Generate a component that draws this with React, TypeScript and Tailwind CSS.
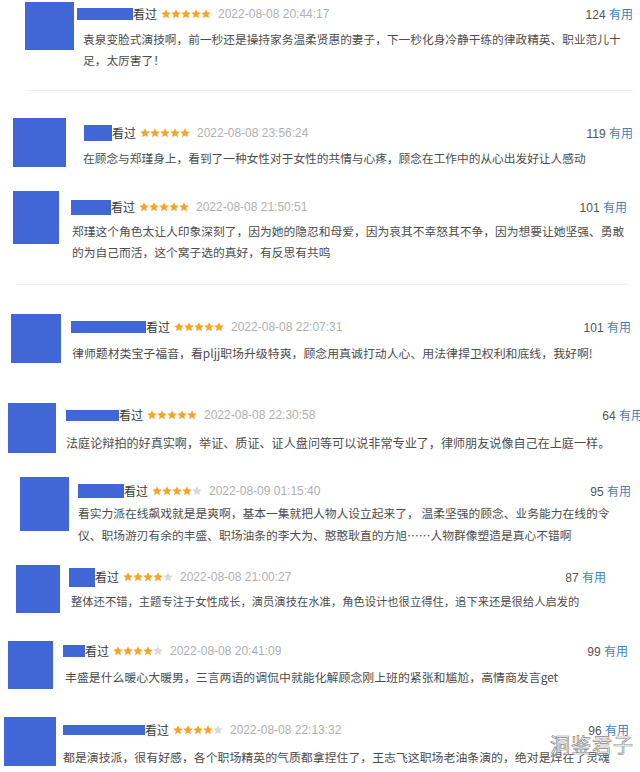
import React from "react";

type Row = {
  outer: string;
  pad: string;
  av: string;
  content: string;
  bar: string;
  text: string;
  inner?: string;
  divider?: string;
  stars: number;
  date: string;
  count: string;
  body: string;
};

const rows: Row[] = [
  {
    outer: "h-[116px]",
    pad: "pl-[25px]",
    av: "w-[49px] h-[48px]",
    content: "ml-[3px] w-[556px] pt-[4px]",
    bar: "w-[56px] h-[12px]",
    text: "mt-[6px] pl-[6px] pr-[10px] text-[11.7px] leading-[21px]",
    inner: "h-[70px]",
    divider: "mt-[18px] ml-[27px] w-[606px]",
    stars: 5,
    date: "2022-08-08 20:44:17",
    count: "124",
    body: "袁泉变脸式演技啊，前一秒还是操持家务温柔贤惠的妻子，下一秒化身冷静干练的律政精英、职业范儿十足，太厉害了！",
  },
  {
    outer: "h-[73px]",
    pad: "pl-[13px]",
    av: "w-[53px] h-[49px]",
    content: "ml-[17px] w-[550px] pt-[7px]",
    bar: "ml-[1px] w-[28px] h-[16px]",
    text: "mt-[6px] pl-0 text-[11.7px] leading-[21px]",
    stars: 5,
    date: "2022-08-08 23:56:24",
    count: "119",
    body: "在顾念与郑瑾身上，看到了一种女性对于女性的共情与心疼，顾念在工作中的从心出发好让人感动",
  },
  {
    outer: "h-[123px]",
    pad: "pl-[13px]",
    av: "w-[46px] h-[53px]",
    content: "ml-[12px] w-[556px] pt-[8px]",
    bar: "w-[40px] h-[15px]",
    text: "mt-[5px] pl-[1px] text-[11.75px] leading-[21px]",
    inner: "h-[72px]",
    divider: "mt-[21px] ml-[16px] w-[613px]",
    stars: 5,
    date: "2022-08-08 21:50:51",
    count: "101",
    body: "郑瑾这个角色太让人印象深刻了，因为她的隐忍和母爱，因为哀其不幸怒其不争，因为想要让她坚强、勇敢的为自己而活，这个窝子选的真好，有反思有共鸣",
  },
  {
    outer: "h-[89px]",
    pad: "pl-[11px]",
    av: "w-[50px] h-[49px]",
    content: "ml-[10px] w-[560px] pt-[5px]",
    bar: "w-[75px] h-[12px]",
    text: "mt-[7px] pl-[1px] text-[11.9px] leading-[21px]",
    stars: 5,
    date: "2022-08-08 22:07:31",
    count: "101",
    body: "律师题材类宝子福音，看pljj职场升级特爽，顾念用真诚打动人心、用法律捍卫权利和底线，我好啊!",
  },
  {
    outer: "h-[74px]",
    pad: "pl-[8px]",
    av: "w-[48px] h-[50px]",
    content: "ml-[10px] w-[577px] pt-[4px]",
    bar: "w-[53px] h-[11px]",
    text: "mt-[9px] pl-0 text-[12.1px] leading-[21px]",
    stars: 5,
    date: "2022-08-08 22:30:58",
    count: "64",
    body: "法庭论辩拍的好真实啊，举证、质证、证人盘问等可以说非常专业了，律师朋友说像自己在上庭一样。",
  },
  {
    outer: "h-[88px]",
    pad: "pl-[20px]",
    av: "w-[49px] h-[54px]",
    content: "ml-[9px] w-[553px] pt-[6px]",
    bar: "w-[46px] h-[14px]",
    text: "mt-[3px] pl-0 pr-[17px] text-[11.75px] leading-[22px]",
    stars: 4,
    date: "2022-08-09 01:15:40",
    count: "95",
    body: "看实力派在线飙戏就是是爽啊，基本一集就把人物人设立起来了， 温柔坚强的顾念、业务能力在线的令仪、职场游刃有余的丰盛、职场油条的李大为、憨憨耿直的方旭……人物群像塑造是真心不错啊",
  },
  {
    outer: "h-[76px]",
    pad: "pl-[16px]",
    av: "w-[44px] h-[48px]",
    content: "ml-[9px] w-[537px] pt-[4px]",
    bar: "w-[26px] h-[19px]",
    text: "mt-[6px] pl-[2px] text-[11.3px] leading-[21px]",
    stars: 4,
    date: "2022-08-08 21:00:27",
    count: "87",
    body: "整体还不错，主题专注于女性成长，演员演技在水准，角色设计也很立得住，追下来还是很给人启发的",
  },
  {
    outer: "h-[76px]",
    pad: "pl-[8px]",
    av: "w-[45px] h-[48px]",
    content: "ml-[10px] w-[565px] pt-[2px]",
    bar: "w-[22px] h-[12px]",
    text: "mt-[7px] pl-[2px] text-[11.9px] leading-[21px]",
    stars: 4,
    date: "2022-08-08 20:41:09",
    count: "99",
    body: "丰盛是什么暖心大暖男，三言两语的调侃中就能化解顾念刚上班的紧张和尴尬，高情商发言get",
  },
  {
    outer: "h-[55px]",
    pad: "pl-[4px]",
    av: "w-[52px] h-[49px]",
    content: "ml-[7px] w-[566px] pt-[5px]",
    bar: "w-[82px] h-[10px]",
    text: "mt-[8px] pl-0 text-[11.9px] leading-[21px]",
    stars: 4,
    date: "2022-08-08 22:13:32",
    count: "96",
    body: "都是演技派，很有好感，各个职场精英的气质都拿捏住了，王志飞这职场老油条演的，绝对是焊在了灵魂",
  },
];

function Star({ on }: { on: boolean }) {
  return (
    <svg width="10" height="10" viewBox="1 1.5 22 21" className="shrink-0">
      <path
        d="M12 1.5l3.1 6.9 7.4.7-5.6 5 1.7 7.4L12 17.6l-6.6 3.9 1.7-7.4-5.6-5 7.4-.7z"
        fill={on ? "#f7a42c" : "#d9d9d9"}
      />
    </svg>
  );
}

function Review({ r }: { r: Row }) {
  return (
    <div className={`flex ${r.pad} ${r.inner ?? ""}`}>
      <div className={`${r.av} shrink-0 bg-[#4167d6]`} />
      <div className={`${r.content} shrink-0`}>
        <div className="flex h-[16px] items-center whitespace-nowrap">
          <div className={`${r.bar} shrink-0 bg-[#4167d6]`} />
          <span className="text-[12px] leading-[16px] text-[#3a3a3a] font-['Noto_Sans_CJK_SC',sans-serif]">
            看过
          </span>
          <span className="ml-[4px] flex">
            {[0, 1, 2, 3, 4].map((i) => (
              <Star key={i} on={i < r.stars} />
            ))}
          </span>
          <span className="ml-[7px] text-[12px] leading-[16px] text-[#b0b0b0] font-['Liberation_Sans',sans-serif]">
            {r.date}
          </span>
          <span className="ml-auto text-[12px] leading-[16px] font-['Liberation_Sans','Noto_Sans_CJK_SC',sans-serif]">
            <span className="text-[#555555]">{r.count} </span>
            <span className="text-[#3f7fc4] font-['Noto_Sans_CJK_SC',sans-serif]">有用</span>
          </span>
        </div>
        <p className={`${r.text} text-[#4d4d4d] font-['Noto_Sans_CJK_SC',sans-serif]`}>{r.body}</p>
      </div>
    </div>
  );
}

export default function App() {
  return (
    <div className="relative w-[640px] h-[772px] overflow-hidden bg-white pt-[2px]">
      {rows.map((r, i) => (
        <div key={i} className={`${r.outer} shrink-0`}>
          <Review r={r} />
          {r.divider && <div className={`${r.divider} h-px bg-[#efefef]`} />}
        </div>
      ))}
      <div className="absolute left-[550px] top-[734px] text-[20px] leading-[22px] tracking-[1px] text-white font-['Noto_Sans_CJK_SC',sans-serif] [-webkit-text-stroke:0.7px_#8a8a8a]">
        洞鉴君子
      </div>
    </div>
  );
}
